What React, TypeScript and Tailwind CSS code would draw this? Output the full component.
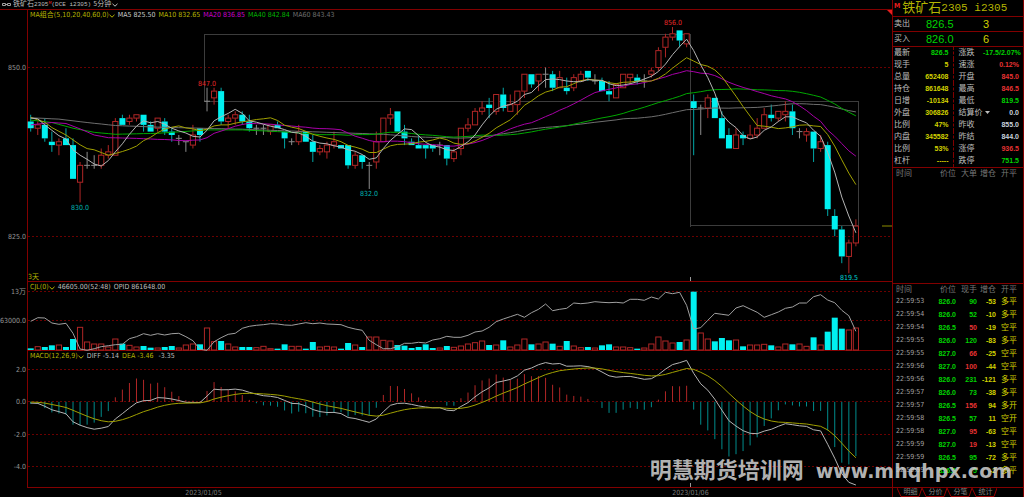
import React from "react";

type Candle = { kind: string; high: number; top: number; bottom: number; low: number };

/* kind, high, body top, body bottom, low: half-point steps below 850 */
const CANDLES: Candle[] = `
c 14 16 18 19|r 16 17 18 20|c 15 17 21 22|c 19 22 23 25|r 21 22 23 26|c 18 21 23 23|c 21 23 33 33|r 28 29 34 40
w 25 29 29 30|w 26 29 29 30|r 24 26 29 30|r 23 25 26 27|r 15 16 26 26|c 14 15 17 17|r 14 15 16 17|r 14 14 15 16
c 14 14 17 19|c 16 17 19 19|r 15 15 18 19|c 15 16 19 20|c 18 19 20 22|w 20 21 21 23|w 22 22 22 25|r 17 20 23 24
c 18 18 20 22|w 6 10 10 13|r 6 7 9 11|c 6 7 16 17|r 14 15 16 18|r 13 14 15 17|c 13 14 16 17|c 14 16 18 19
w 17 18 18 20|w 17 18 18 20|r 17 17 19 20|c 16 17 18 18|c 19 19 21 24|w 21 22 22 23|r 17 19 22 23|c 19 19 22 22
c 20 22 25 28|r 23 24 25 26|r 22 23 25 27|r 19 22 23 24|c 23 23 24 24|c 23 23 29 30|r 25 26 29 30|c 26 26 28 30
w 28 29 29 36|r 19 22 28 30|r 15 15 22 22|r 12 14 15 17|c 13 13 19 19|c 17 19 21 23|c 21 22 23 23|c 20 23 24 24
c 23 23 24 27|c 23 23 24 25|w 22 23 23 26|c 23 23 27 29|r 24 25 27 28|r 18 18 24 26|r 15 17 18 19|r 12 13 17 17
r 10 12 13 14|c 9 11 12 15|r 8 8 13 14|c 6 8 12 13|r 8 11 13 13|r 7 7 11 14|r 2 2 7 9|c 2 2 5 6
r 2 2 4 7|w 0 2 2 6|c 1 2 6 7|r 1 3 6 6|c 3 6 7 8|r 2 3 6 7|r 1 2 4 4|c 1 1 3 4
w 2 4 4 5|c 3 4 7 7|c 4 7 8 10|r 5 5 9 9|r 2 2 6 6|r 2 2 3 5|c 2 3 4 5|w 2 4 4 6
r 0 1 2 3|r -6 -5 0 1|r -10 -9 -6 -3|r -12 -10 -9 -8|c -11 -11 -8 -6|r -10 -10 -7 -6|c 8 10 12 26|w 11 12 12 20
r 8 9 12 15|c 9 9 15 15|c 13 15 21 21|c 18 20 24 24|r 18 20 24 24|c 19 20 21 23|r 17 20 21 21|r 15 18 20 21
r 12 14 18 18|c 11 14 15 16|r 13 13 15 16|r 10 13 14 16|c 11 13 18 20|w 18 19 19 21|r 18 19 20 22|c 19 19 24 28
r 20 22 24 25|c 22 23 42 44|c 42 44 48 50|c 47 48 56 58|r 51 52 56 61|r 45 47 52 53`
  .trim()
  .split(/[|\n]/)
  .map((row) => {
    const [kind, ...n] = row.trim().split(" ");
    const [high, top, bottom, low] = n.map(Number);
    return { kind, high, top, bottom, low };
  });

const VOLUMES = [
  5, 10, 9, 14, 15, 9, 33, 68, 24, 18, 18, 9, 33, 19, 14, 9, 12, 7, 6, 9, 12, 6, 15, 18, 17, 66, 25, 27, 18, 9, 9, 9, 7,
  11, 4, 4, 17, 11, 11, 4, 24, 9, 11, 9, 4, 21, 15, 9, 39, 39, 29, 27, 15, 13, 6, 9, 17, 6, 6, 12, 8, 12, 18, 22, 27, 15,
  15, 29, 9, 15, 33, 17, 18, 24, 19, 11, 27, 12, 7, 9, 6, 14, 17, 9, 9, 7, 4, 6, 18, 39, 27, 21, 24, 30, 175, 51, 33, 26,
  36, 29, 30, 11, 15, 15, 17, 14, 9, 18, 17, 18, 11, 38, 15, 55, 97, 64, 60, 66,
];

const OPEN_INTEREST = [
  154, 143, 144, 159, 163, 160, 190, 237, 241, 236, 230, 227, 224, 223, 206, 200, 191, 196, 191, 195, 191, 190, 200, 212,
  238, 241, 215, 203, 193, 190, 175, 169, 166, 164, 161, 162, 165, 166, 162, 158, 161, 159, 162, 163, 164, 172, 177, 181,
  211, 224, 236, 236, 230, 220, 220, 217, 219, 210, 206, 199, 202, 202, 196, 186, 183, 172, 155, 147, 140, 133, 142, 128,
  118, 102, 122, 118, 115, 99, 101, 99, 95, 97, 98, 97, 99, 88, 88, 91, 81, 87, 67, 71, 67, 106, 177, 173, 151, 130, 133,
  136, 114, 107, 117, 127, 142, 134, 126, 115, 111, 99, 99, 80, 74, 90, 98, 121, 137, 184,
];

const px = (i: number) => 30.7 + i * 7.053;
const py = (t: number) => 67.5 + t * 3.374;
const my = (v: number) => 401.8 - v * 16.2;
const closes = CANDLES.map((c) => (c.kind === "c" ? c.bottom : c.top));
const path = (ys: number[]) => ys.map((y, i) => `${px(i).toFixed(1)},${y.toFixed(1)}`).join(" ");

/* Simple moving average; bars that precede a full window follow the seed points. */
function average(n: number, seed: [number, number][]) {
  return closes.map((_, i) => {
    if (i >= n - 1) return closes.slice(i - n + 1, i + 1).reduce((a, b) => a + b, 0) / n;
    const k = Math.max(1, seed.findIndex(([x]) => x >= i));
    const [x0, y0] = seed[k - 1];
    const [x1, y1] = seed[k];
    return y0 + ((y1 - y0) * (i - x0)) / (x1 - x0);
  });
}

const AVERAGES = [
  { color: "#6e6e6e", v: average(60, [[0, 14.9], [4, 15.3], [8, 16.3], [12, 17.2], [17, 17.6], [24, 18], [30, 18.3], [38, 18.9], [50, 19.8], [55, 20.6], [60, 20.9]]) },
  { color: "#00a800", v: average(40, [[0, 15.6], [3, 16.3], [6, 18], [9, 19.2], [12, 19.8], [18, 19.5], [25, 18.5], [30, 18.5], [35, 19], [39, 19.5]]) },
  { color: "#a800a8", v: average(20, [[0, 17], [3, 16.3], [5, 16.6], [7, 18.2], [9, 20], [11, 20.8], [15, 21], [19, 21.4]]) },
  { color: "#a0a000", v: average(10, [[0, 14.8], [2, 16.2], [3, 17.8], [5, 20], [7, 22.9], [9, 25.2]]) },
  { color: "#b4b4b4", v: average(5, [[0, 15], [1, 15.2], [2, 17], [3, 18.6], [4, 20.4]]) },
];

const MACD = (() => {
  let fast = 842;
  let slow = 842;
  let dea = 0;
  return closes.map((t) => {
    const p = 850 - t / 2;
    fast += (p - fast) * (2 / 13);
    slow += (p - slow) * (2 / 27);
    const diff = fast - slow;
    dea += (diff - dea) * 0.2;
    return { diff, dea, bar: 2 * (diff - dea) };
  });
})();

const RED = "#b02626";
const CYAN = "#00f0f0";

function Grid({ at, label, y }: { at?: number; label: string; y: number }) {
  return (
    <g>
      <line x1="28" x2="892" y1={y} y2={y} stroke="#6a0000" strokeDasharray="2 2" shapeRendering="crispEdges" />
      <text x="26" y={at ?? y + 2.5} textAnchor="end" fontSize="7" fill="#969696">{label}</text>
    </g>
  );
}

function PriceChart() {
  return (
    <svg viewBox="28 20 864 261" className="block h-auto w-full overflow-visible" role="img" aria-label="5分钟 K线">
      <Grid y={67.5} at={70} label="850.0" />
      <Grid y={236.5} at={239} label="825.0" />
      <path d="M204.5 101V34.5H690.5V226.5M204.5 101.5H858.5V225.5H691" fill="none" stroke="#3c3c3c" shapeRendering="crispEdges" />
      <path d="M690.5 277V281" stroke="#999" />
      {CANDLES.map((c, i) => {
        const x = px(i);
        const color = c.kind === "c" ? "#00a8a8" : c.kind === "r" ? RED : "#8c8c8c";
        return (
          <g key={i} stroke={color} strokeWidth="1">
            <path d={`M${x} ${py(c.high)}V${py(c.top)}M${x} ${py(c.bottom)}V${py(c.low)}`} />
            {c.kind === "w" ? (
              <path d={`M${x - 3} ${py(c.top)}h6`} />
            ) : c.kind === "c" ? (
              <rect x={x - 3} y={py(c.top)} width="6" height={py(c.bottom) - py(c.top)} fill={CYAN} stroke="none" />
            ) : (
              <rect x={x - 2.6} y={py(c.top)} width="5.2" height={py(c.bottom) - py(c.top)} fill="#000" />
            )}
          </g>
        );
      })}
      {AVERAGES.map((a) => (
        <polyline key={a.color} points={path(a.v.map(py))} fill="none" stroke={a.color} />
      ))}
      <path d="M882 226H892" stroke="#8c8c00" />
      <path d="M887 10H892V15z" fill="#e61e1e" />
      <g fontSize="7" textAnchor="middle">
        <text x="207" y="86" fill="#e62828">847.0</text>
        <text x="673" y="25" fill="#e62828">856.0</text>
        <text x="80" y="210" fill="#00b4b4">830.0</text>
        <text x="369" y="196" fill="#00b4b4">832.0</text>
        <text x="849" y="280" fill="#00d2d2">819.5</text>
      </g>
      <text x="28" y="279" fontSize="7" fill="#b4b400">3天</text>
    </svg>
  );
}

function VolumeChart() {
  return (
    <svg viewBox="28 292 864 58" className="block h-auto w-full overflow-visible" role="img" aria-label="成交量">
      <Grid y={291} at={294} label="13万" />
      <Grid y={320.5} at={323} label="63000.0" />
      {VOLUMES.map((v, i) => {
        const h = v / 3;
        const x = px(i);
        return CANDLES[i].kind === "c" ? (
          <rect key={i} x={x - 3} y={350 - h} width="6" height={h} fill={CYAN} />
        ) : (
          <rect key={i} x={x - 2.6} y={350 - h} width="5.2" height={h} fill="none" stroke={RED} />
        );
      })}
      <polyline points={path(OPEN_INTEREST.map((z) => 270 + z / 3))} fill="none" stroke="#a0a0a0" />
    </svg>
  );
}

function MacdChart() {
  return (
    <svg viewBox="28 361 864 126" className="block h-auto w-full overflow-visible" role="img" aria-label="MACD">
      <Grid y={369.5} label="2.0" />
      <Grid y={401.5} label="0.0" />
      <Grid y={434.5} label="-2.0" />
      <Grid y={466.5} label="-4.0" />
      {MACD.map((m, i) => (
        <path key={i} d={`M${px(i)} ${my(0)}V${my(m.bar)}`} stroke={m.bar > 0 ? RED : "#008c8c"} />
      ))}
      <polyline points={path(MACD.map((m) => my(m.diff)))} fill="none" stroke="#b4b4b4" />
      <polyline points={path(MACD.map((m) => my(m.dea)))} fill="none" stroke="#a0a000" />
      <path d="M690.5 483V487" stroke="#999" />
    </svg>
  );
}

function Chevron() {
  return (
    <svg viewBox="0 0 6 4" className="mt-px h-1 w-1.5" fill="none" stroke="currentColor">
      <path d="M.5 .8 3 3.2 5.5 .8" />
    </svg>
  );
}

function Legend({ name, items }: { name: string; items: [string, string][] }) {
  return (
    <div className="flex h-[10px] items-center gap-[3px] pl-0.5 text-[7px] leading-[10px] whitespace-pre">
      <button className="flex items-center text-[#b4b400]">{name}<Chevron /></button>
      {items.map(([text, color]) => <span key={text} className={color}>{text}</span>)}
    </div>
  );
}

const QUOTES: [string, string, string, string, string, string][] = [
  ["最新", "826.5", "text-[#00d200]", "涨跌", "-17.5/2.07%", "text-[#00d200]"],
  ["现手", "5", "text-[#d2d200]", "速涨", "0.12%", "text-[#e63232]"],
  ["总量", "652408", "text-[#d2d200]", "开盘", "845.0", "text-[#e63232]"],
  ["持仓", "861648", "text-[#d2d200]", "最高", "846.5", "text-[#e63232]"],
  ["日增", "-10134", "text-[#d2d200]", "最低", "819.5", "text-[#00d200]"],
  ["外盘", "306826", "text-[#d2d200]", "结算价", "0.0", "text-[#c8d2dc]"],
  ["比例", "47%", "text-[#d2d200]", "昨收", "855.0", "text-[#c8d2dc]"],
  ["内盘", "345582", "text-[#d2d200]", "昨结", "844.0", "text-[#c8d2dc]"],
  ["比例", "53%", "text-[#d2d200]", "涨停", "936.5", "text-[#e63232]"],
  ["杠杆", "-----", "text-[#d2d200]", "跌停", "751.5", "text-[#00d200]"],
];

const TICKS: [string, string, string, string, string][] = [
  ["22:59:53", "826.0", "90", "-53", "多平"],
  ["22:59:54", "826.0", "52", "-10", "多平"],
  ["22:59:54", "826.5", "50", "-19", "空平"],
  ["22:59:55", "826.0", "120", "-83", "多平"],
  ["22:59:55", "827.0", "66", "-25", "空平"],
  ["22:59:56", "827.0", "100", "-44", "空平"],
  ["22:59:56", "826.0", "231", "-121", "多平"],
  ["22:59:57", "826.0", "73", "-38", "多平"],
  ["22:59:57", "826.5", "156", "94", "多开"],
  ["22:59:58", "826.5", "57", "11", "空开"],
  ["22:59:58", "827.0", "95", "-63", "空平"],
  ["22:59:59", "827.0", "19", "-13", "空平"],
  ["22:59:59", "826.5", "95", "-72", "多平"],
  ["22:59:59", "826.5", "5", "-2", "多平"],
];
const BUY_ROWS = new Set([2, 4, 5, 8, 10, 11]);

function TickHead({ lots }: { lots: string }) {
  return (
    <thead>
      <tr className="h-[11px] text-[8px] text-[#787878]">
        <th className="w-[33px] p-0 pl-[3px] text-left font-normal">时间</th>
        <th className="w-[30px] p-0 text-right font-normal">价位</th>
        <th className="w-[21px] p-0 text-right font-normal">{lots}</th>
        <th className="w-[19px] p-0 text-right font-normal">增仓</th>
        <th className="p-0 pr-1.5 text-right font-normal">开平</th>
      </tr>
    </thead>
  );
}

function QuotePanel() {
  return (
    <aside className="flex w-[132px] shrink-0 flex-col border-x border-[#820000]">
      <h1 className="flex h-4 items-center pl-px text-[13px] leading-4 whitespace-pre text-[#b4b400]">
        <b className="self-start text-[7px] leading-3 text-[#e61e1e]">M</b>
        <span className="ml-0.5">铁矿石</span>
        <span className="font-['Liberation_Mono',monospace] text-[11px]">2305 i2305</span>
      </h1>
      {[["卖出", "826.5", "3"], ["买入", "826.0", "6"]].map(([name, price, lots]) => (
        <div key={name} className="flex h-[15px] items-center border-t border-[#820000] pl-px font-['Liberation_Sans','Noto_Sans_CJK_SC',sans-serif] text-[11px] leading-[14px]">
          <span className="w-8 text-[8px] text-[#bebebe]">{name}</span>
          <span className="w-[57px] text-[#00d200]">{price}</span>
          <span className="text-[#d2d200]">{lots}</span>
        </div>
      ))}
      <div className="border-y border-[#820000]">
        <table className="w-full table-fixed border-collapse font-['Liberation_Sans','Noto_Sans_CJK_SC',sans-serif] text-[7px]">
          <tbody>
            {QUOTES.map(([a, b, bc, c, d, dc], i) => (
              <tr key={i} className="h-3 leading-3">
                <th className="w-6 p-0 pl-px text-left text-[8px] font-normal whitespace-nowrap text-[#bebebe]">{a}</th>
                <td className={`w-9 border-r border-dashed border-[#820000] p-0 pr-1 text-right font-bold ${bc}`}>{b}</td>
                <th className="w-[30px] p-0 pl-[5px] text-left text-[8px] font-normal whitespace-nowrap text-[#bebebe]">
                  {c}
                  {c === "结算价" && <svg viewBox="0 0 5 3" className="ml-0.5 inline h-[3px] w-[5px]"><path d="M0 0h5L2.5 3z" fill="#bebebe" /></svg>}
                </th>
                <td className={`p-0 pr-1 text-right font-bold whitespace-nowrap ${dc}`}>{d}</td>
              </tr>
            ))}
          </tbody>
        </table>
      </div>
      <table className="mb-[104px] w-full table-fixed border-collapse leading-[11px]"><TickHead lots="大单" /></table>
      <div className="border-t border-[#820000]">
        <table className="w-full table-fixed border-collapse text-[7px] leading-[11px]">
          <TickHead lots="现手" />
          <tbody>
            {TICKS.map(([time, price, lots, delta, side], i) => (
              <tr key={i} className="h-[13px] text-right font-['Liberation_Sans','Noto_Sans_CJK_SC',sans-serif] font-bold text-[#d2d200]">
                <td className="p-0 pl-[3px] text-left font-['DejaVu_Sans_Condensed',sans-serif] font-normal text-[#a0a0a0]">{time}</td>
                <td className="p-0 text-[#00d200]">{price}</td>
                <td className={BUY_ROWS.has(i) ? "p-0 text-[#e63232]" : "p-0 text-[#00d200]"}>{lots}</td>
                <td className="p-0">{delta}</td>
                <td className="p-0 pr-1.5 text-[8px] font-normal">{side}</td>
              </tr>
            ))}
          </tbody>
        </table>
      </div>
      <nav className="mt-[10px] flex h-[10px] border-t border-[#820000] pl-1 text-[7px] leading-[9px] text-[#828282]">
        {["明细", "分价", "分笔", "统计"].map((t) => (
          <button key={t} className="relative h-[9px] w-[25px] pl-0.5 text-center">
            <svg viewBox="0 0 25 9" className="absolute inset-0 h-[9px] w-[25px]" fill="none" stroke="#960000">
              <path d="M0 0 4 8.500H22L25 0" />
            </svg>
            {t}
          </button>
        ))}
      </nav>
    </aside>
  );
}

export default function App() {
  return (
    <div className="relative flex min-h-screen items-start overflow-hidden bg-black font-['DejaVu_Sans_Condensed','Noto_Sans','Noto_Sans_CJK_SC',sans-serif]">
      <main className="min-w-0 flex-1">
        <header className="flex h-[9px] items-center pl-0.5 text-[7px] leading-[9px] whitespace-pre text-[#bebebe]">
          <svg viewBox="0 0 9 3" className="mr-0.5 h-[3px] w-[9px]" fill="none" stroke="#a0a0a0"><path d="M.5 .5h3v2h-3zM5.500 .5h3v2h-3zM3.500 1.500h2" /></svg>
          铁矿石
          <span className="font-['Liberation_Mono',monospace] text-[6px]">2305</span>
          <sup className="text-[4px] text-[#e61e1e]">M</sup>
          <span className="font-['Liberation_Mono',monospace] text-[6px]">(DCE i2305)</span>
          <button className="ml-0.5 flex items-center gap-px">5分钟<Chevron /></button>
        </header>
        <div className="border-t border-[#820000] pl-[27px]">
          <section className="border-b border-l border-[#820000]">
            <Legend name="MA组合(5,10,20,40,60,0)" items={[["MA5 825.50", "text-[#c8c8c8]"], ["MA10 832.65", "text-[#b4b400]"], ["MA20 836.85", "text-[#c800c8]"], ["MA40 842.84", "text-[#00b400]"], ["MA60 843.43", "text-[#6e6e6e]"]]} />
            <PriceChart />
          </section>
          <section className="border-b border-l border-[#820000]">
            <Legend name="CJL(0)" items={[["46605.00(52:48)", "text-[#bebebe]"], ["OPID 861648.00", "text-[#bebebe]"]]} />
            <VolumeChart />
          </section>
          <section className="border-b border-l border-[#820000]">
            <Legend name="MACD(12,26,9)" items={[["DIFF -5.14", "text-[#bebebe]"], ["DEA -3.46", "text-[#b4b400]"], [" -3.35", "text-[#bebebe]"]]} />
            <MacdChart />
          </section>
          <svg viewBox="27 488 865 9" className="block h-auto w-full overflow-visible" role="img" aria-label="日期">
            <g fontSize="7" textAnchor="middle" fill="#787878">
              <text x="203.500" y="495">2023/01/05</text>
              <text x="690.500" y="495">2023/01/06</text>
            </g>
          </svg>
        </div>
      </main>
      <QuotePanel />
      <p className="absolute right-3 bottom-3.5 flex items-center gap-3 text-[22px] leading-6 font-bold whitespace-nowrap text-[#d2d2d2]/85">
        <span>明慧期货培训网</span>
        <span className="font-['DejaVu_Sans',sans-serif] text-[19px]">www.mhqhpx.com</span>
      </p>
    </div>
  );
}
